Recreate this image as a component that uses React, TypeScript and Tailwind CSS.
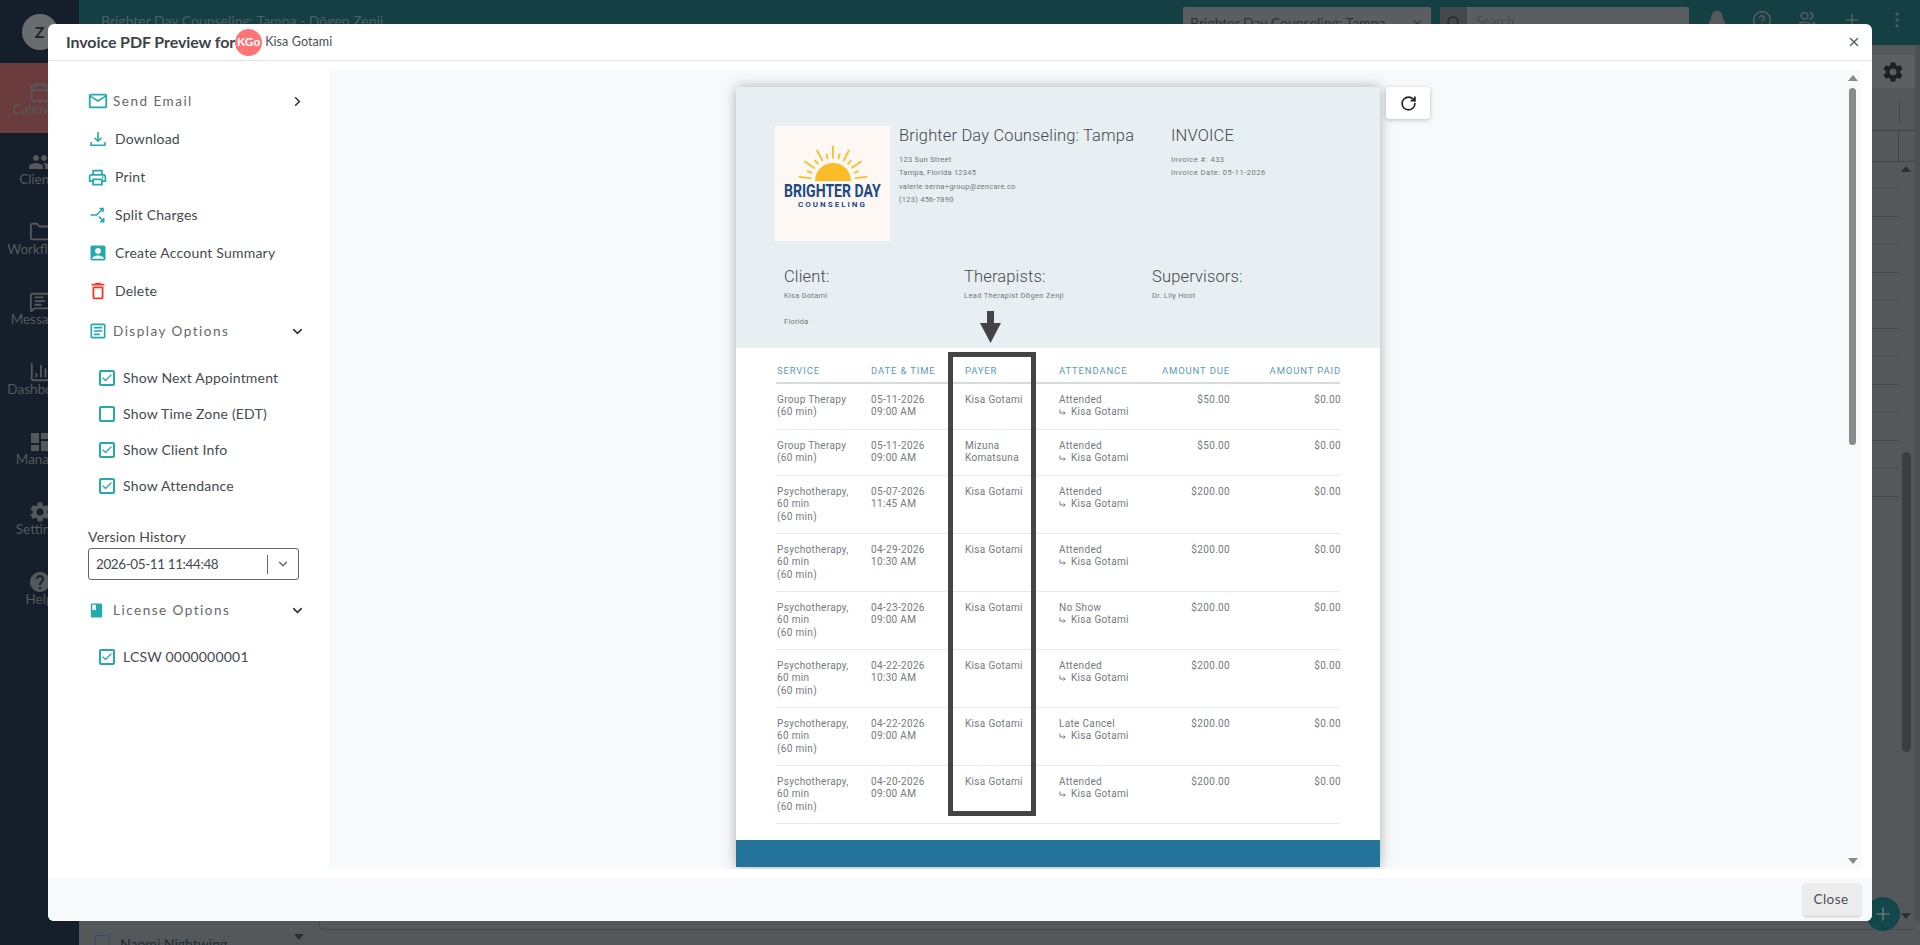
import React from "react";
import { Calendar, Users, Folder, MessageSquareText, ChartColumn, CircleHelp, RotateCw, X, ChevronRight, ChevronDown, Check, Search, Bell, Plus, EllipsisVertical } from "lucide-react";
import { MdAccountBox, MdBook, MdOutlineArticle, MdOutlineDelete, MdOutlineEmail, MdOutlinePrint, MdSettings, MdHelp, MdDashboard, MdPeople } from "react-icons/md";

const nav = [
  { label: "Calendar", icon: <Calendar size={22} />, active: true },
  { label: "Clients", icon: <MdPeople size={24} /> },
  { label: "Workflows", icon: <Folder size={22} /> },
  { label: "Messages", icon: <MessageSquareText size={22} /> },
  { label: "Dashboard", icon: <ChartColumn size={22} /> },
  { label: "Manage", icon: <MdDashboard size={24} /> },
  { label: "Settings", icon: <MdSettings size={24} /> },
  { label: "Help", icon: <MdHelp size={24} /> },
];

const rows = [
  { s: ["Group Therapy", "(60 min)"], d: "05-11-2026", t: "09:00 AM", p: ["Kisa Gotami"], a: "Attended", due: "$50.00", h: "h-[46px]" },
  { s: ["Group Therapy", "(60 min)"], d: "05-11-2026", t: "09:00 AM", p: ["Mizuna", "Komatsuna"], a: "Attended", due: "$50.00", h: "h-[46px]" },
  { s: ["Psychotherapy,", "60 min", "(60 min)"], d: "05-07-2026", t: "11:45 AM", p: ["Kisa Gotami"], a: "Attended", due: "$200.00", h: "h-[58px]" },
  { s: ["Psychotherapy,", "60 min", "(60 min)"], d: "04-29-2026", t: "10:30 AM", p: ["Kisa Gotami"], a: "Attended", due: "$200.00", h: "h-[58px]" },
  { s: ["Psychotherapy,", "60 min", "(60 min)"], d: "04-23-2026", t: "09:00 AM", p: ["Kisa Gotami"], a: "No Show", due: "$200.00", h: "h-[58px]" },
  { s: ["Psychotherapy,", "60 min", "(60 min)"], d: "04-22-2026", t: "10:30 AM", p: ["Kisa Gotami"], a: "Attended", due: "$200.00", h: "h-[58px]" },
  { s: ["Psychotherapy,", "60 min", "(60 min)"], d: "04-22-2026", t: "09:00 AM", p: ["Kisa Gotami"], a: "Late Cancel", due: "$200.00", h: "h-[58px]" },
  { s: ["Psychotherapy,", "60 min", "(60 min)"], d: "04-20-2026", t: "09:00 AM", p: ["Kisa Gotami"], a: "Attended", due: "$200.00", h: "h-[58px]" },
];

const TEAL = "text-[#26a9ac]";

function DownloadIcon() {
  return (
    <svg width="16" height="16" viewBox="0 0 16 16" fill="none" stroke="#26a9ac" strokeWidth="1.6">
      <path d="M8 1v9M4.5 6.8 8 10.2l3.5-3.4M1 11v3.2h14V11" />
    </svg>
  );
}

function SplitIcon() {
  return (
    <svg width="16" height="16" viewBox="0 0 16 16" fill="none" stroke="#26a9ac" strokeWidth="1.6">
      <path d="M0.5 8h6l6-6M9.5 1.5h3.5V5M9 9.5l4 4.5M10 14.6h3.7V11" />
    </svg>
  );
}

function MenuRow({ icon, label }: { icon: React.ReactNode; label: string }) {
  return (
    <div className="flex h-[38px] items-center">
      <div className={`mr-[6px] flex w-[23px] shrink-0 items-center justify-center ${TEAL}`}>{icon}</div>
      <span className="-mt-px text-[14px] tracking-[0.2px] text-[#454a4f]">{label}</span>
    </div>
  );
}

function SectionRow({ icon, label, open, className }: { icon: React.ReactNode; label: string; open?: boolean; className?: string }) {
  return (
    <div className={`flex h-[38px] items-center justify-between pr-[16px] ${className ?? ""}`}>
      <div className="flex items-center">
        <div className={`mr-[4px] flex w-[23px] shrink-0 items-center justify-center ${TEAL}`}>{icon}</div>
        <span className="text-[13.5px] tracking-[1.5px] text-[#63686d]">{label}</span>
      </div>
      {open ? <ChevronDown size={15} strokeWidth={2.6} className="text-[#333] -mr-[4px]" /> : <ChevronRight size={15} strokeWidth={2.6} className="text-[#333] -mr-[4px]" />}
    </div>
  );
}

function CheckRow({ label, checked = true }: { label: string; checked?: boolean }) {
  return (
    <div className="flex h-[36px] items-center pl-[13px]">
      <span className="flex h-[16px] w-[16px] items-center justify-center rounded-[2px] border-2 border-[#26a9ac] text-[#26a9ac]">
        {checked && <Check size={12} strokeWidth={2.6} />}
      </span>
      <span className="-mt-px ml-[8px] text-[14px] tracking-[0.2px] text-[#454a4f]">{label}</span>
    </div>
  );
}

function Logo() {
  const rays = [-84, -70, -56, -42, -28, -14, 0, 14, 28, 42, 56, 70, 84];
  return (
    <div className="flex h-[115px] w-[115px] shrink-0 flex-col items-center overflow-hidden bg-[#fdf8f3] pt-[19px]">
      <svg width="72" height="36" viewBox="-36 -36 72 36" className="shrink-0">
        <path d="M-18 0a18 18 0 0 1 36 0z" fill="#fbbc28" />
        {rays.map((a, i) => {
          const r = (a * Math.PI) / 180;
          const outer = i % 2 === 0 ? 34.5 : 27.5;
          return (
            <line key={a} x1={Math.sin(r) * 22} y1={-Math.cos(r) * 22 - 0.5} x2={Math.sin(r) * outer} y2={-Math.cos(r) * outer - 0.5} stroke="#fbbc28" strokeWidth="1.8" />
          );
        })}
      </svg>
      <div className="shrink-0 scale-x-[0.74] whitespace-nowrap font-['Roboto',sans-serif] text-[19px] font-bold leading-[19px] text-[#1c4a85]">BRIGHTER DAY</div>
      <div className="whitespace-nowrap font-['Roboto',sans-serif] text-[8px] font-bold leading-[9px] tracking-[2px] text-[#1c4a85]">COUNSELING</div>
    </div>
  );
}

const GRID = "grid grid-cols-[94px_94px_94px_172px_110px] pl-px";

function Row({ r }: { r: (typeof rows)[number] }) {
  return (
    <div className={`${GRID} border-b border-[#e6e8ea] pt-[10px] text-[10px] leading-[12.3px] tracking-[0.33px] text-[#75797d] ${r.h}`}>
      <div>{r.s.map((x) => <div key={x}>{x}</div>)}</div>
      <div>
        <div>{r.d}</div>
        <div>{r.t}</div>
      </div>
      <div>{r.p.map((x) => <div key={x}>{x}</div>)}</div>
      <div className="flex justify-between pr-px">
        <div>
          <div>{r.a}</div>
          <div className="flex items-center">
            <svg width="7" height="7" viewBox="0 0 7 7" fill="none" stroke="#6a6e72" strokeWidth="0.9" className="mr-[5px]">
              <path d="M1 0.5v3.5h5M4.5 2.5 6.2 4 4.5 5.5" />
            </svg>
            Kisa Gotami
          </div>
        </div>
        <div>{r.due}</div>
      </div>
      <div className="text-right">$0.00</div>
    </div>
  );
}

function InvoicePage() {
  const heading = "text-[16.5px] font-light tracking-[0.15px] text-[#45494d]";
  const small = "text-[7.5px] tracking-[0.25px] text-[#72767a]";
  return (
    <div className="relative w-[644px] bg-white font-['Roboto',sans-serif] shadow-[0_0_12px_rgba(0,0,0,0.3)]">
      <div className="h-[261px] bg-[#e8eff3] pt-[39px] pl-[39px]">
        <div className="flex">
          <Logo />
          <div className="ml-[9px] w-[272px]">
            <div className={`${heading} leading-[20px]`}>Brighter Day Counseling: Tampa</div>
            <div className={`${small} mt-[7px] leading-[13.3px]`}>
              <div>123 Sun Street</div>
              <div>Tampa, Florida 12345</div>
              <div>valerie.serna+group@zencare.co</div>
              <div>(123) 456-7890</div>
            </div>
          </div>
          <div>
            <div className={`${heading} leading-[20px] tracking-[0.4px]`}>INVOICE</div>
            <div className="mt-[7px] text-[7.5px] leading-[13.3px] tracking-[0.5px] text-[#72767a]">
              <div>Invoice #: 433</div>
              <div>Invoice Date: 05-11-2026</div>
            </div>
          </div>
        </div>
        <div className="mt-[25px] flex pl-[9px]">
          <div className="w-[180px]">
            <div className={`${heading} leading-[22px]`}>Client:</div>
            <div className={`${small} mt-[2px] leading-[12px]`}>Kisa Gotami</div>
            <div className={`${small} mt-[14px] leading-[12px]`}>Florida</div>
          </div>
          <div className="w-[188px]">
            <div className={`${heading} leading-[22px]`}>Therapists:</div>
            <div className={`${small} mt-[2px] leading-[12px] tracking-[0.35px]`}>Lead Therapist Dōgen Zenji</div>
          </div>
          <div>
            <div className={`${heading} leading-[22px]`}>Supervisors:</div>
            <div className={`${small} mt-[2px] leading-[12px]`}>Dr. Lily Hoot</div>
          </div>
        </div>
      </div>
      <div className="px-[40px] pt-[15px] pb-[16px]">
        <div className={`${GRID} h-[21px] border-b-2 border-[#d8dbde] pt-px text-[9.5px] leading-[14px] tracking-[0.85px] text-[#5b9ab5]`}>
          <div>SERVICE</div>
          <div>DATE &amp; TIME</div>
          <div>PAYER</div>
          <div className="flex justify-between pr-px">
            <span>ATTENDANCE</span>
            <span>AMOUNT DUE</span>
          </div>
          <div className="text-right">AMOUNT PAID</div>
        </div>
        {rows.map((r, i) => (
          <Row key={i} r={r} />
        ))}
      </div>
      <div className="h-[27px] bg-[#23739a]" />
      <svg width="21" height="32" viewBox="0 0 21 32" className="absolute left-[244px] top-[224px]" fill="#444">
        <path d="M7 0h7v12h7L10.5 32 0 12h7z" />
      </svg>
      <div className="absolute left-[212px] top-[265px] h-[464px] w-[88px] border-[5px] border-[#444]" />
      <button className="absolute left-[650px] top-0 flex h-[32px] w-[44px] items-center justify-center rounded-[3px] bg-white text-[#222] shadow-[0_1px_4px_rgba(0,0,0,0.25)]">
        <RotateCw size={17} strokeWidth={2.4} />
      </button>
    </div>
  );
}

function Backdrop() {
  const dotted = [188, 244, 300, 356, 412, 468];
  return (
    <div className="flex h-full w-full bg-[#54585b] font-['Lato',sans-serif]">
      <aside className="flex w-[79px] shrink-0 flex-col bg-[#141f2b]">
        <div className="flex h-[63px] items-start justify-center pt-[14px]">
          <div className="flex h-[36px] w-[36px] items-center justify-center rounded-full bg-[#6a6d70] text-[16px] font-bold text-[#222]">Z</div>
        </div>
        {nav.map((n) => (
          <div key={n.label} className={`flex h-[70px] flex-col items-center pt-[17px] text-[#55595c] ${n.active ? "bg-[#6b3c3e]" : ""}`}>
            <div className="flex h-[24px] items-center">{n.icon}</div>
            <span className="-mt-[2px] text-[13.5px] leading-[14px]">{n.label}</span>
          </div>
        ))}
      </aside>
      <main className="flex min-w-0 flex-1 flex-col">
        <div className="flex h-[45px] items-start bg-[#144044] pt-[7px] pl-[22px] pr-[13px]">
          <span className="mt-[7px] flex-1 whitespace-nowrap text-[14px] leading-[14px] text-[#4e5f60]">Brighter Day Counseling: Tampa - Dōgen Zenji</span>
          <div className="flex h-[30px] w-[248px] items-center justify-between rounded-[2px] bg-[#5a5e61] px-[7px] text-[14px] text-[#2c3335]">
            Brighter Day Counseling: Tampa
            <ChevronDown size={13} />
          </div>
          <div className="ml-[9px] flex h-[30px] w-[249px] items-center rounded-[2px] bg-[#5a5e61] text-[13px] text-[#45494c]">
            <span className="flex h-full w-[27px] items-center justify-center bg-[#44484b] text-[#222]"><Search size={15} /></span>
            <span className="ml-[9px]">Search</span>
          </div>
          <div className="ml-[18px] flex items-center gap-[25px] pt-[3px] text-[#55595c]">
            <Bell size={20} fill="currentColor" />
            <CircleHelp size={20} />
            <Users size={20} />
            <Plus size={20} />
            <EllipsisVertical size={20} />
          </div>
        </div>
        <div className="flex flex-1 justify-end bg-[#4c5053] pr-[5px]">
          <div className="relative w-[60px] bg-[#54585b]">
            <div className="absolute right-0 top-[10px] flex h-[33px] w-[60px] items-center justify-end rounded-[3px] bg-[#5b5f62] pr-[10px] text-[#1b1f22]">
              <MdSettings size={24} />
            </div>
            <div className="absolute left-0 right-0 top-[85px] h-px bg-[#3f4346]" />
            <div className="absolute left-0 right-0 top-[116px] h-px bg-[#3f4346]" />
            <div className="absolute right-[15px] top-[58px] h-[20px] w-px bg-[#3f4346]" />
            <div className="absolute right-[16px] top-[85px] h-[31px] w-px bg-[#3f4346]" />
            {dotted.map((y) => (
              <React.Fragment key={y}>
                <div className="absolute left-0 right-[16px] border-t border-dotted border-[#44484b]" style={{ top: y - 45 }} />
                <div className="absolute left-0 right-[16px] h-px bg-[#44484b]" style={{ top: y - 17 }} />
              </React.Fragment>
            ))}
            <div className="absolute right-[4px] top-[121px] h-0 w-0 border-x-[5px] border-b-[6px] border-x-transparent border-b-[#2b2f32]" />
            <div className="absolute right-[4px] top-[407px] h-[300px] w-[9px] rounded-full bg-[#3a3e41]" />
          </div>
        </div>
        <div className="flex h-[24px] shrink-0 items-start">
          <div className="relative flex h-full w-[240px] shrink-0 items-end pl-[16px] text-[14px] leading-[10px] text-[#1f2a35]">
            <span className="mb-[-4px] mr-[10px] h-[14px] w-[15px] rounded-[2px] border border-[#3f4a63]" />
            <span className="mb-[-4px]">Naomi Nightwing</span>
            <span className="absolute right-[15px] top-[13px] h-0 w-0 border-x-[5px] border-t-[6px] border-x-transparent border-t-[#2b2f32]" />
          </div>
          <div className="mr-[5px] h-[9px] flex-1 rounded-bl-[4px] border-b border-l border-[#464a4d]" />
        </div>
      </main>
      <div className="absolute left-[1866px] top-[897px] flex h-[34px] w-[34px] items-center justify-center rounded-full bg-[#12484a] text-[#5f7476]">
        <Plus size={20} />
      </div>
      <div className="absolute left-[1901px] top-[913px] h-0 w-0 border-x-[5px] border-t-[6px] border-x-transparent border-t-[#2b2f32]" />
    </div>
  );
}

function Modal() {
  return (
    <div className="absolute left-[48px] top-[24px] flex h-[897px] w-[1824px] flex-col overflow-hidden rounded-[6px] bg-white font-['Lato',sans-serif]">
      <header className="flex h-[37px] shrink-0 items-center border-b border-[#e2e4e6] pl-[18px] pr-[11px]">
        <span className="text-[16px] font-bold tracking-[-0.1px] text-[#3d4348]">Invoice PDF Preview for</span>
        <span className="flex h-[27px] w-[27px] items-center justify-center rounded-full bg-[#ff7577] text-[12px] font-bold text-white">KGo</span>
        <span className="ml-[3px] text-[12.5px] tracking-[0.1px] text-[#4a4f54]">Kisa Gotami</span>
        <X size={14} strokeWidth={2.6} className="ml-auto text-[#546a7b]" />
      </header>
      <div className="flex min-h-0 flex-1">
        <div className="w-[281px] shrink-0 pl-[38px] pr-[12px] pt-[21px]">
          <SectionRow icon={<MdOutlineEmail size={22} />} label="Send Email" />
          <MenuRow icon={<DownloadIcon />} label="Download" />
          <MenuRow icon={<MdOutlinePrint size={21} />} label="Print" />
          <MenuRow icon={<SplitIcon />} label="Split Charges" />
          <MenuRow icon={<MdAccountBox size={20} />} label="Create Account Summary" />
          <MenuRow icon={<span className="text-[#ee3a2e]"><MdOutlineDelete size={22} /></span>} label="Delete" />
          <SectionRow icon={<MdOutlineArticle size={20} />} label="Display Options" open className="mt-[2px]" />
          <div className="pt-[10px]">
            <CheckRow label="Show Next Appointment" />
            <CheckRow label="Show Time Zone (EDT)" checked={false} />
            <CheckRow label="Show Client Info" />
            <CheckRow label="Show Attendance" />
          </div>
          <div className="mt-[24px] pl-[2px] text-[14px] leading-[18px] tracking-[0.2px] text-[#454a4f]">Version History</div>
          <div className="ml-[2px] mt-[2px] flex h-[32px] w-[211px] items-center rounded-[3px] border border-[#666] pl-[7px] text-[13.5px] tracking-[-0.4px] text-[#454a4f]">
            <span className="flex-1">2026-05-11 11:44:48</span>
            <span className="h-[19px] w-px bg-[#666]" />
            <ChevronDown size={14} strokeWidth={2.4} className="mx-[8px] text-[#666]" />
          </div>
          <SectionRow icon={<MdBook size={17} className="-ml-[3px]" />} label="License Options" open className="mt-[11px]" />
          <div className="pt-[10px]">
            <CheckRow label="LCSW 0000000001" />
          </div>
        </div>
        <div className="my-[9px] mr-[11px] flex min-w-0 flex-1 overflow-hidden bg-[#f8f9fb]">
          <div className="relative min-w-0 flex-1 overflow-hidden pl-[407px] pt-[17px]">
            <InvoicePage />
          </div>
          <div className="relative w-[16px] shrink-0">
            <div className="absolute left-[3px] top-[5px] h-0 w-0 border-x-[5px] border-b-[6px] border-x-transparent border-b-[#8a8a8a]" />
            <div className="absolute left-[4px] top-[18px] h-[357px] w-[7px] rounded-full bg-[#8a8a8a]" />
            <div className="absolute bottom-[5px] left-[3px] h-0 w-0 border-x-[5px] border-t-[6px] border-x-transparent border-t-[#8a8a8a]" />
          </div>
        </div>
      </div>
      <footer className="flex h-[43px] shrink-0 items-center justify-end bg-[#f8f9fb] pr-[11px]">
        <button className="h-[33px] w-[58px] rounded-[3px] bg-[#ececec] pr-[2px] text-[13.5px] tracking-[0.4px] text-[#4a4f54] shadow-[0_1px_2px_rgba(0,0,0,0.2)]">Close</button>
      </footer>
    </div>
  );
}

export default function App() {
  return (
    <div className="relative h-[945px] w-[1920px] overflow-hidden">
      <Backdrop />
      <Modal />
    </div>
  );
}
